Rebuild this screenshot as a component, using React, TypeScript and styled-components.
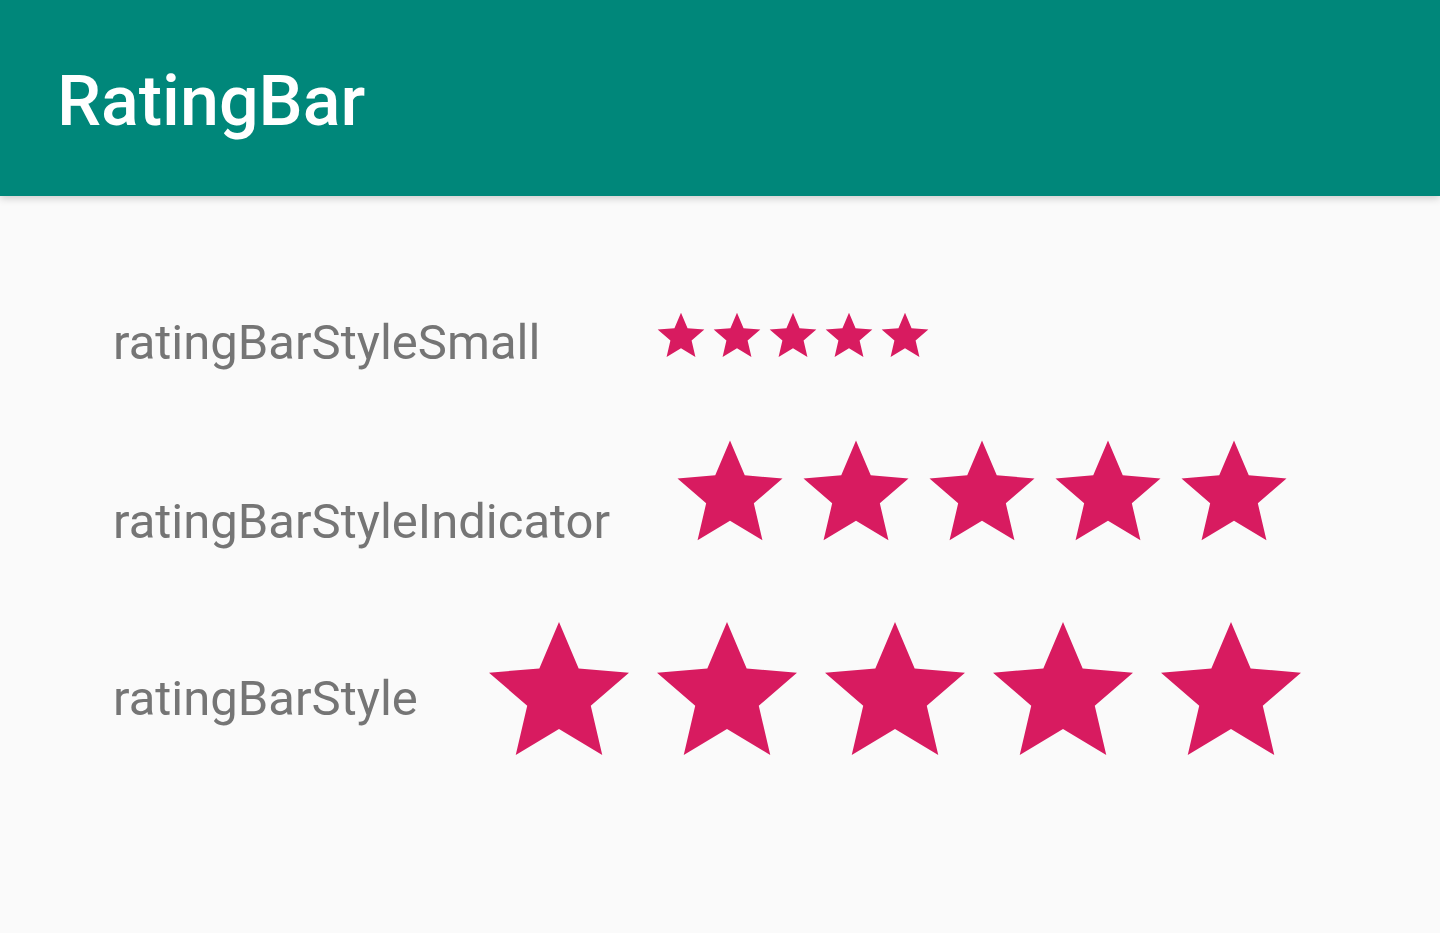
import React from 'react';
import styled, { createGlobalStyle } from 'styled-components';

const GlobalStyle = createGlobalStyle`
  html, body {
    margin: 0;
    padding: 0;
    background: #fafafa;
    font-family: Roboto, "Noto Sans", "Liberation Sans", sans-serif;
  }
`;

const Page = styled.div`
  min-height: 933px;
  background: #fafafa;
`;

const AppBar = styled.header`
  height: 196px;
  box-sizing: border-box;
  padding: 66px 0 0 57px;
  background: #00877a;
  box-shadow: 0 2px 8px rgba(0, 0, 0, 0.2);
  position: relative;
  z-index: 1;
`;

const Title = styled.h1`
  margin: 0;
  font-size: 70px;
  line-height: 1;
  font-weight: 500;
  color: #ffffff;
`;

const Content = styled.main`
  display: flex;
  flex-direction: column;
  padding: 112px 0 0 113px;
`;

const Row = styled.div<{ $top: number; $height: number }>`
  display: flex;
  align-items: flex-start;
  height: ${p => p.$height}px;
  margin-top: ${p => p.$top}px;
`;

const Label = styled.span<{ $offset: number; $gap: number }>`
  font-size: 49px;
  line-height: 1;
  color: #757575;
  margin-top: ${p => p.$offset}px;
  margin-right: ${p => p.$gap}px;
  white-space: nowrap;
`;

const Stars = styled.div`
  display: flex;
`;

const StarBox = styled.svg<{ $size: number }>`
  display: block;
  width: ${p => p.$size}px;
  height: ${p => p.$size}px;
  fill: #d81b60;
`;

const Star = ({ size }: { size: number }) => (
  <StarBox $size={size} viewBox="0 0 24 24">
    <path d="M12 17.27L18.18 21l-1.64-7.03L22 9.24l-7.19-.61L12 2 9.19 8.63 2 9.24l5.46 4.73L5.82 21z" />
  </StarBox>
);

const bars = [
  { name: 'ratingBarStyleSmall', size: 56, top: 0, offset: 10, gap: 113 },
  { name: 'ratingBarStyleIndicator', size: 126, top: 66, offset: 67, gap: 57 },
  { name: 'ratingBarStyle', size: 168, top: 52, offset: 66, gap: 57 },
];

const App = () => {
  return (
    <Page>
      <GlobalStyle />
      <AppBar>
        <Title>RatingBar</Title>
      </AppBar>
      <Content>
        {bars.map(bar => (
          <Row key={bar.name} $top={bar.top} $height={bar.size}>
            <Label $offset={bar.offset} $gap={bar.gap}>{bar.name}</Label>
            <Stars>
              {[0, 1, 2, 3, 4].map(i => (
                <Star key={i} size={bar.size} />
              ))}
            </Stars>
          </Row>
        ))}
      </Content>
    </Page>
  );
};

export default App;
